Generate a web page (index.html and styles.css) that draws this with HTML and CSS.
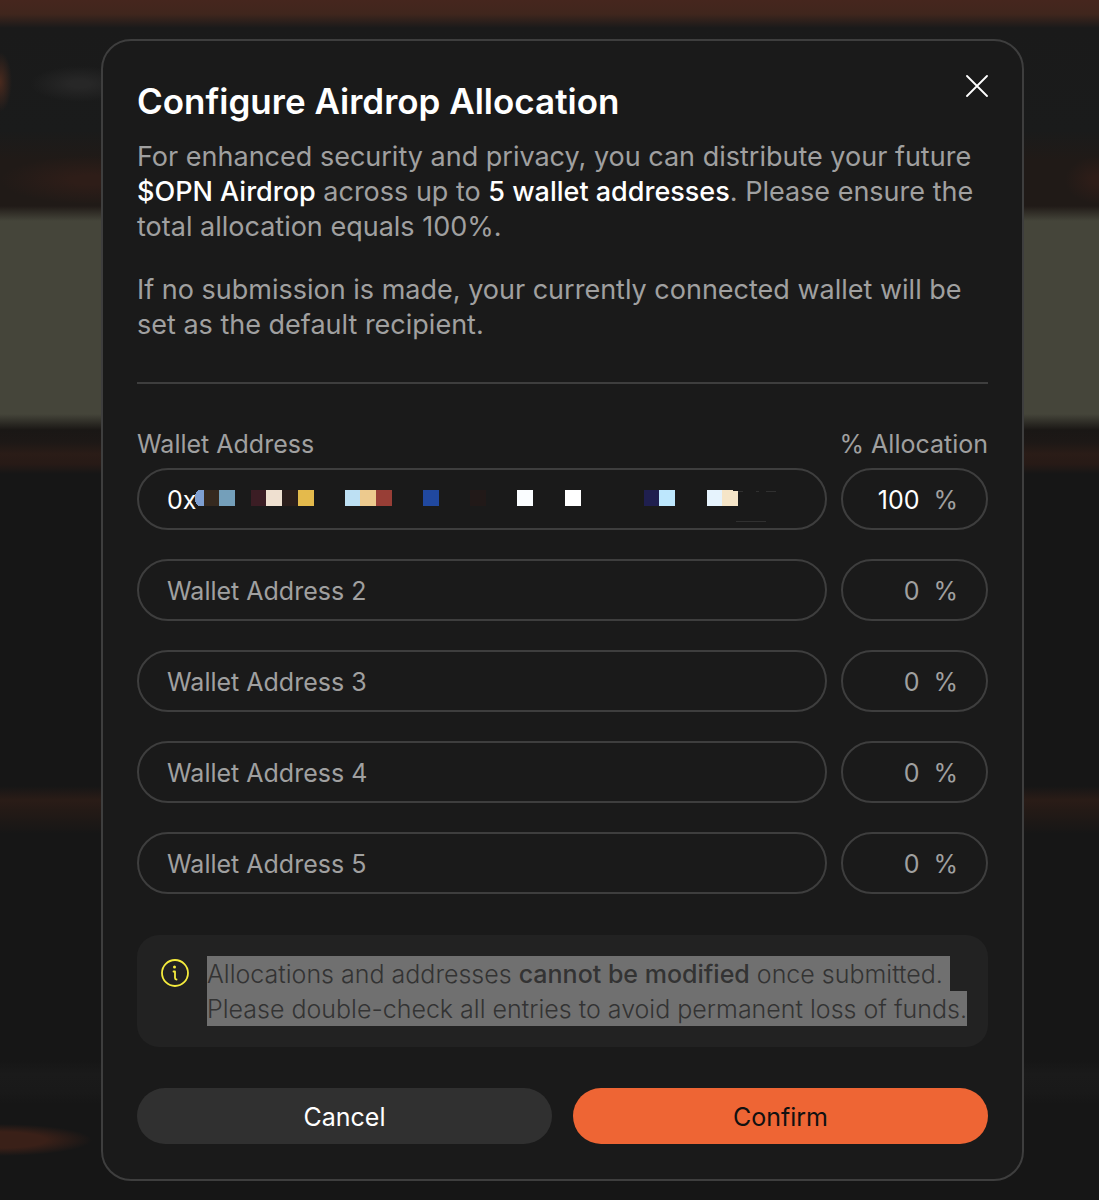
FILE: index.html
```html
<!DOCTYPE html>
<html lang="en">
<head>
    <meta charset="UTF-8">
    <meta name="viewport" content="width=device-width, initial-scale=1.0">
    <title>Configure Airdrop Allocation</title>
    <link rel="stylesheet" href="styles.css">
</head>
<body>
    <div class="modal" role="dialog" aria-labelledby="modalTitle">
        <div class="modal-header">
            <h1 id="modalTitle">Configure Airdrop Allocation</h1>
            <button type="button" class="close-btn" aria-label="Close">
                <svg width="22" height="22" viewBox="0 0 22 22" fill="none" stroke="#fff" stroke-width="1.8" stroke-linecap="round">
                    <path d="M1 1L21 21M21 1L1 21"/>
                </svg>
            </button>
        </div>
        <div class="intro">
            <p>For enhanced security and privacy, you can distribute your future <strong>$OPN Airdrop</strong> across up to <strong>5 wallet addresses</strong>. Please ensure the total allocation equals 100%.</p>
            <p>If no submission is made, your currently connected wallet will be set as the default recipient.</p>
        </div>
        <hr>
        <form id="allocationForm">
            <div class="labels">
                <label for="wallet1">Wallet Address</label>
                <label for="percent1">% Allocation</label>
            </div>
            <div class="rows">
                <div class="row">
                    <div class="field address">
                        <input type="text" id="wallet1" name="wallet1" value="0x">
                        <svg class="mask" width="582" height="34" viewBox="0 0 582 34" shape-rendering="crispEdges" aria-hidden="true">
                            <path d="M9 0H4Q0 2 0 8T4 16H9Z" fill="#7e9fd1"/>
                            <rect x="9" width="15" height="16" fill="#35291f"/>
                            <rect x="24" width="16" height="16" fill="#749fba"/>
                            <rect x="56" width="15" height="16" fill="#3b1d24"/>
                            <rect x="71" width="16" height="16" fill="#efe0d0"/>
                            <rect x="87" width="16" height="16" fill="#2b1e1b"/>
                            <rect x="103" width="16" height="16" fill="#e4ba4c"/>
                            <rect x="150" width="15" height="16" fill="#bde0f3"/>
                            <rect x="165" width="16" height="16" fill="#edca8e"/>
                            <rect x="181" width="16" height="16" fill="#983e36"/>
                            <rect x="228" width="16" height="16" fill="#20489f"/>
                            <rect x="275" width="16" height="16" fill="#211918"/>
                            <rect x="322" width="16" height="16" fill="#fafdff"/>
                            <rect x="370" width="16" height="16" fill="#fff"/>
                            <rect x="449" width="15" height="16" fill="#1f1f4f"/>
                            <rect x="464" width="16" height="16" fill="#bde7fd"/>
                            <rect x="512" width="15" height="16" fill="#e6f3fd"/>
                            <rect x="527" width="16" height="16" fill="#f5e5c8"/>
                            <path d="M538 0H543V1H538Z" fill="#1a1a1a"/>
                            <path d="M543 1H548V2H543ZM561 1H564V2H561ZM571 1H581V2H571ZM541 31H571V32H541Z" fill="#303030"/>
                        </svg>
                    </div>
                    <div class="field percent">
                        <input type="text" inputmode="numeric" id="percent1" name="percent1" value="100">
                        <span>%</span>
                    </div>
                </div>
                <div class="row">
                    <div class="field address">
                        <input type="text" name="wallet2" placeholder="Wallet Address 2" aria-label="Wallet Address 2">
                    </div>
                    <div class="field percent">
                        <input type="text" inputmode="numeric" name="percent2" placeholder="0" aria-label="% Allocation 2">
                        <span>%</span>
                    </div>
                </div>
                <div class="row">
                    <div class="field address">
                        <input type="text" name="wallet3" placeholder="Wallet Address 3" aria-label="Wallet Address 3">
                    </div>
                    <div class="field percent">
                        <input type="text" inputmode="numeric" name="percent3" placeholder="0" aria-label="% Allocation 3">
                        <span>%</span>
                    </div>
                </div>
                <div class="row">
                    <div class="field address">
                        <input type="text" name="wallet4" placeholder="Wallet Address 4" aria-label="Wallet Address 4">
                    </div>
                    <div class="field percent">
                        <input type="text" inputmode="numeric" name="percent4" placeholder="0" aria-label="% Allocation 4">
                        <span>%</span>
                    </div>
                </div>
                <div class="row">
                    <div class="field address">
                        <input type="text" name="wallet5" placeholder="Wallet Address 5" aria-label="Wallet Address 5">
                    </div>
                    <div class="field percent">
                        <input type="text" inputmode="numeric" name="percent5" placeholder="0" aria-label="% Allocation 5">
                        <span>%</span>
                    </div>
                </div>
            </div>
            <div class="notice">
                <svg width="28" height="28" viewBox="0 0 28 28" fill="none" stroke="#f5ec3d" stroke-width="1.8" stroke-linecap="round" stroke-linejoin="round">
                    <circle cx="14" cy="14" r="13"/>
                    <path d="M12.500 12.500H14V19Q14 20.500 15.500 20.500"/>
                    <circle cx="13.500" cy="8" r="1.500" fill="#f5ec3d" stroke="none"/>
                </svg>
                <p><mark>Allocations and addresses <strong>cannot be modified</strong> once submitted.&nbsp;<br>Please double-check all entries to avoid permanent loss of funds.</mark></p>
            </div>
            <div class="actions">
                <button type="button" class="cancel">Cancel</button>
                <button type="submit" class="confirm">Confirm</button>
            </div>
        </form>
    </div>
</body>
</html>
```
FILE: styles.css
```css
* {
    box-sizing: border-box;
}
body {
    margin: 0;
    min-height: 100vh;
    padding: 39px 75px 19px 101px;
    font-family: Inter, sans-serif;
    font-weight: 400;
    color: #a0a0a0;
    background-color: #161616;
    background-image:
        radial-gradient(ellipse 12px 30px at 0 82px, #4a2a1e, transparent),
        radial-gradient(ellipse 50px 18px at 80px 84px, #272727 20%, transparent),
        radial-gradient(ellipse 90px 24px at 90px 180px, #2e1d18 20%, transparent),
        radial-gradient(ellipse 34px 24px at 100% 180px, #2e1d18 20%, transparent),
        radial-gradient(ellipse 92px 16px at 0 1140px, #3a2018 50%, transparent),
        linear-gradient(to bottom,
            #46261e 0, #40261d 14px, #1a1a1a 28px,
            #1a1b1b 130px, #201a17 160px, #201a17 206px,
            #45453a 221px, #45453a 414px, #1a1715 430px,
            #1d1816 442px, #2a1c17 454px, #271a16 464px,
            #161616 474px, #161616 786px, #2a1c17 800px,
            #241a16 810px, #161616 834px, #161616 1060px,
            #1a1a1a 1074px, #191919 1092px, #161616 1104px);
    background-repeat: no-repeat;
}
.modal {
    padding: 34px 34px 35px;
    border: 2px solid #3e3e3e;
    border-radius: 30px;
    background-color: #1a1a1a;
}
.modal-header {
    display: flex;
    justify-content: space-between;
    align-items: flex-start;
}
h1 {
    margin: 0 0 12px;
    font-size: 35px;
    line-height: 52px;
    font-weight: 600;
    color: #fff;
}
.close-btn {
    display: flex;
    padding: 0;
    border: none;
    background: none;
    cursor: pointer;
}
.intro p {
    margin: 0 0 28px;
    font-size: 27px;
    line-height: 35px;
}
.intro strong {
    font-weight: 500;
    color: #fff;
}
hr {
    height: 2px;
    margin: 40px 0 43px;
    border: none;
    background-color: #3e3e3e;
}
.labels {
    display: flex;
    justify-content: space-between;
    margin-bottom: 6px;
    font-size: 25px;
    line-height: 35px;
}
.rows {
    display: flex;
    flex-direction: column;
    gap: 29px;
}
.row {
    display: flex;
    gap: 14px;
}
.field {
    position: relative;
    display: flex;
    align-items: center;
    height: 62px;
    padding: 2px 28px 0;
    border: 2px solid #3e3e3e;
    border-radius: 31px;
    font-size: 25px;
}
.address {
    flex: 1;
}
.percent {
    width: 147px;
    gap: 14px;
}
.field input {
    width: 100%;
    min-width: 0;
    padding: 0;
    border: none;
    outline: none;
    background: none;
    font: inherit;
    color: #fff;
}
.field input::placeholder {
    color: #a0a0a0;
}
.percent input {
    text-align: right;
}
.mask {
    position: absolute;
    left: 56px;
    top: 20px;
}
.notice {
    display: flex;
    gap: 18px;
    margin: 41px 0;
    padding: 22px 24px 20px;
    border-radius: 22px;
    background-color: #222;
}
.notice svg {
    flex: none;
    margin-top: 2px;
}
.notice p {
    margin: 0;
    font-size: 25px;
    line-height: 35px;
    font-weight: 300;
    white-space: nowrap;
}
mark {
    padding: 3px 0 2px;
    background-color: #707070;
    color: #333;
}
.notice strong {
    font-weight: 500;
}
.actions {
    display: flex;
    gap: 21px;
}
.actions button {
    flex: 1;
    height: 56px;
    padding: 2px 0 0;
    border: none;
    border-radius: 28px;
    font: inherit;
    font-size: 25px;
    cursor: pointer;
}
.cancel {
    background-color: #303030;
    color: #fff;
}
.confirm {
    background-color: #ee6534;
    color: #111;
}
```
